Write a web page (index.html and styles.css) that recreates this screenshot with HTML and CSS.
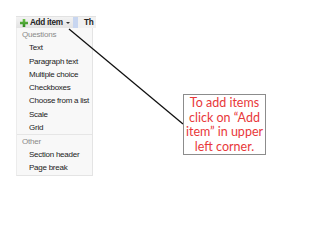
FILE: index.html
```html
<!DOCTYPE html>
<html>
<head>
<meta charset="utf-8">
<link rel="stylesheet" href="styles.css">
</head>
<body>
<div class="slide">
  <div class="toolbar">
    <div class="add-btn">
      <svg class="plus" width="8" height="8" viewBox="0 0 8 8"><defs><linearGradient id="g" x1="0" y1="0" x2="0" y2="1"><stop offset="0" stop-color="#6cc24a"/><stop offset="1" stop-color="#2f8a1f"/></linearGradient></defs><path d="M2.7 0h2.6v2.7H8v2.6H5.3V8H2.7V5.3H0V2.7h2.7z" fill="url(#g)"/></svg>
      <span class="add-label">Add item</span>
      <span class="caret"></span>
    </div>
    <div class="sep"></div>
    <div class="next-tab">Th</div>
  </div>
  <div class="menu">
    <div class="group-label">Questions</div>
    <div class="item">Text</div>
    <div class="item">Paragraph text</div>
    <div class="item">Multiple choice</div>
    <div class="item">Checkboxes</div>
    <div class="item">Choose from a list</div>
    <div class="item">Scale</div>
    <div class="item">Grid</div>
    <div class="group-label divided">Other</div>
    <div class="item">Section header</div>
    <div class="item">Page break</div>
  </div>
  <svg class="pointer" width="320" height="240" viewBox="0 0 320 240"><line x1="69" y1="29" x2="183" y2="124" stroke="#111" stroke-width="1.3"/></svg>
  <div class="callout">To add items click on “Add item” in upper left corner.</div>
</div>
</body>
</html>
```
FILE: styles.css
```css
html, body {
  margin: 0;
  padding: 0;
  background: #ffffff;
}
.slide {
  position: relative;
  width: 320px;
  height: 240px;
  overflow: hidden;
  padding: 16px 0 0 16px;
  box-sizing: border-box;
  font-family: "Liberation Sans", Arial, sans-serif;
}
.toolbar {
  display: flex;
  align-items: stretch;
  width: 80px;
  height: 11px;
  background: linear-gradient(#f4f4f4, #e6e6e6);
  border-top: 1px solid #e2e2e2;
}
.add-btn {
  display: flex;
  align-items: center;
  padding-left: 4px;
  width: 53px;
  background: linear-gradient(#f3f3f3, #e3e3e3);
}
.plus {
  display: block;
  margin-right: 2px;
}
.add-label {
  font-size: 8.2px;
  font-weight: bold;
  color: #222;
  letter-spacing: -0.3px;
}
.caret {
  width: 0;
  height: 0;
  margin-left: 3px;
  margin-top: 1px;
  border-left: 2px solid transparent;
  border-right: 2px solid transparent;
  border-top: 2px solid #333;
}
.sep {
  width: 5px;
  margin-left: 0;
  background: #c8d6f0;
}
.next-tab {
  flex: 1;
  padding-left: 6px;
  font-size: 8.2px;
  font-weight: bold;
  color: #222;
  line-height: 11px;
  letter-spacing: -0.3px;
  white-space: nowrap;
  background: #f1f1f1;
}
.menu {
  width: 75px;
  background: #f8f8f8;
  border-left: 1px solid #ececec;
  border-right: 1px solid #e4e4e4;
  border-bottom: 1px solid #e4e4e4;
  padding-bottom: 1px;
}
.group-label {
  height: 13.3px;
  line-height: 13.3px;
  padding-left: 5px;
  font-size: 8px;
  color: #8a8a8a;
  letter-spacing: -0.2px;
}
.group-label.divided {
  border-top: 1px solid #e6e6e6;
  height: 12.3px;
}
.item {
  height: 13.3px;
  line-height: 13.3px;
  padding-left: 12px;
  font-size: 8px;
  color: #222;
  letter-spacing: -0.25px;
  white-space: nowrap;
}
.pointer {
  position: absolute;
  left: 0;
  top: 0;
  pointer-events: none;
}
.callout {
  position: absolute;
  left: 183px;
  top: 94px;
  width: 81px;
  height: 58px;
  border: 1px solid #8c8c8c;
  background: #fff;
  box-sizing: content-box;
  padding: 1px 0 0 0;
  font-family: Lato, "Open Sans", sans-serif;
  font-size: 12.5px;
  line-height: 14.6px;
  color: #e8383a;
  text-align: center;
}
```
